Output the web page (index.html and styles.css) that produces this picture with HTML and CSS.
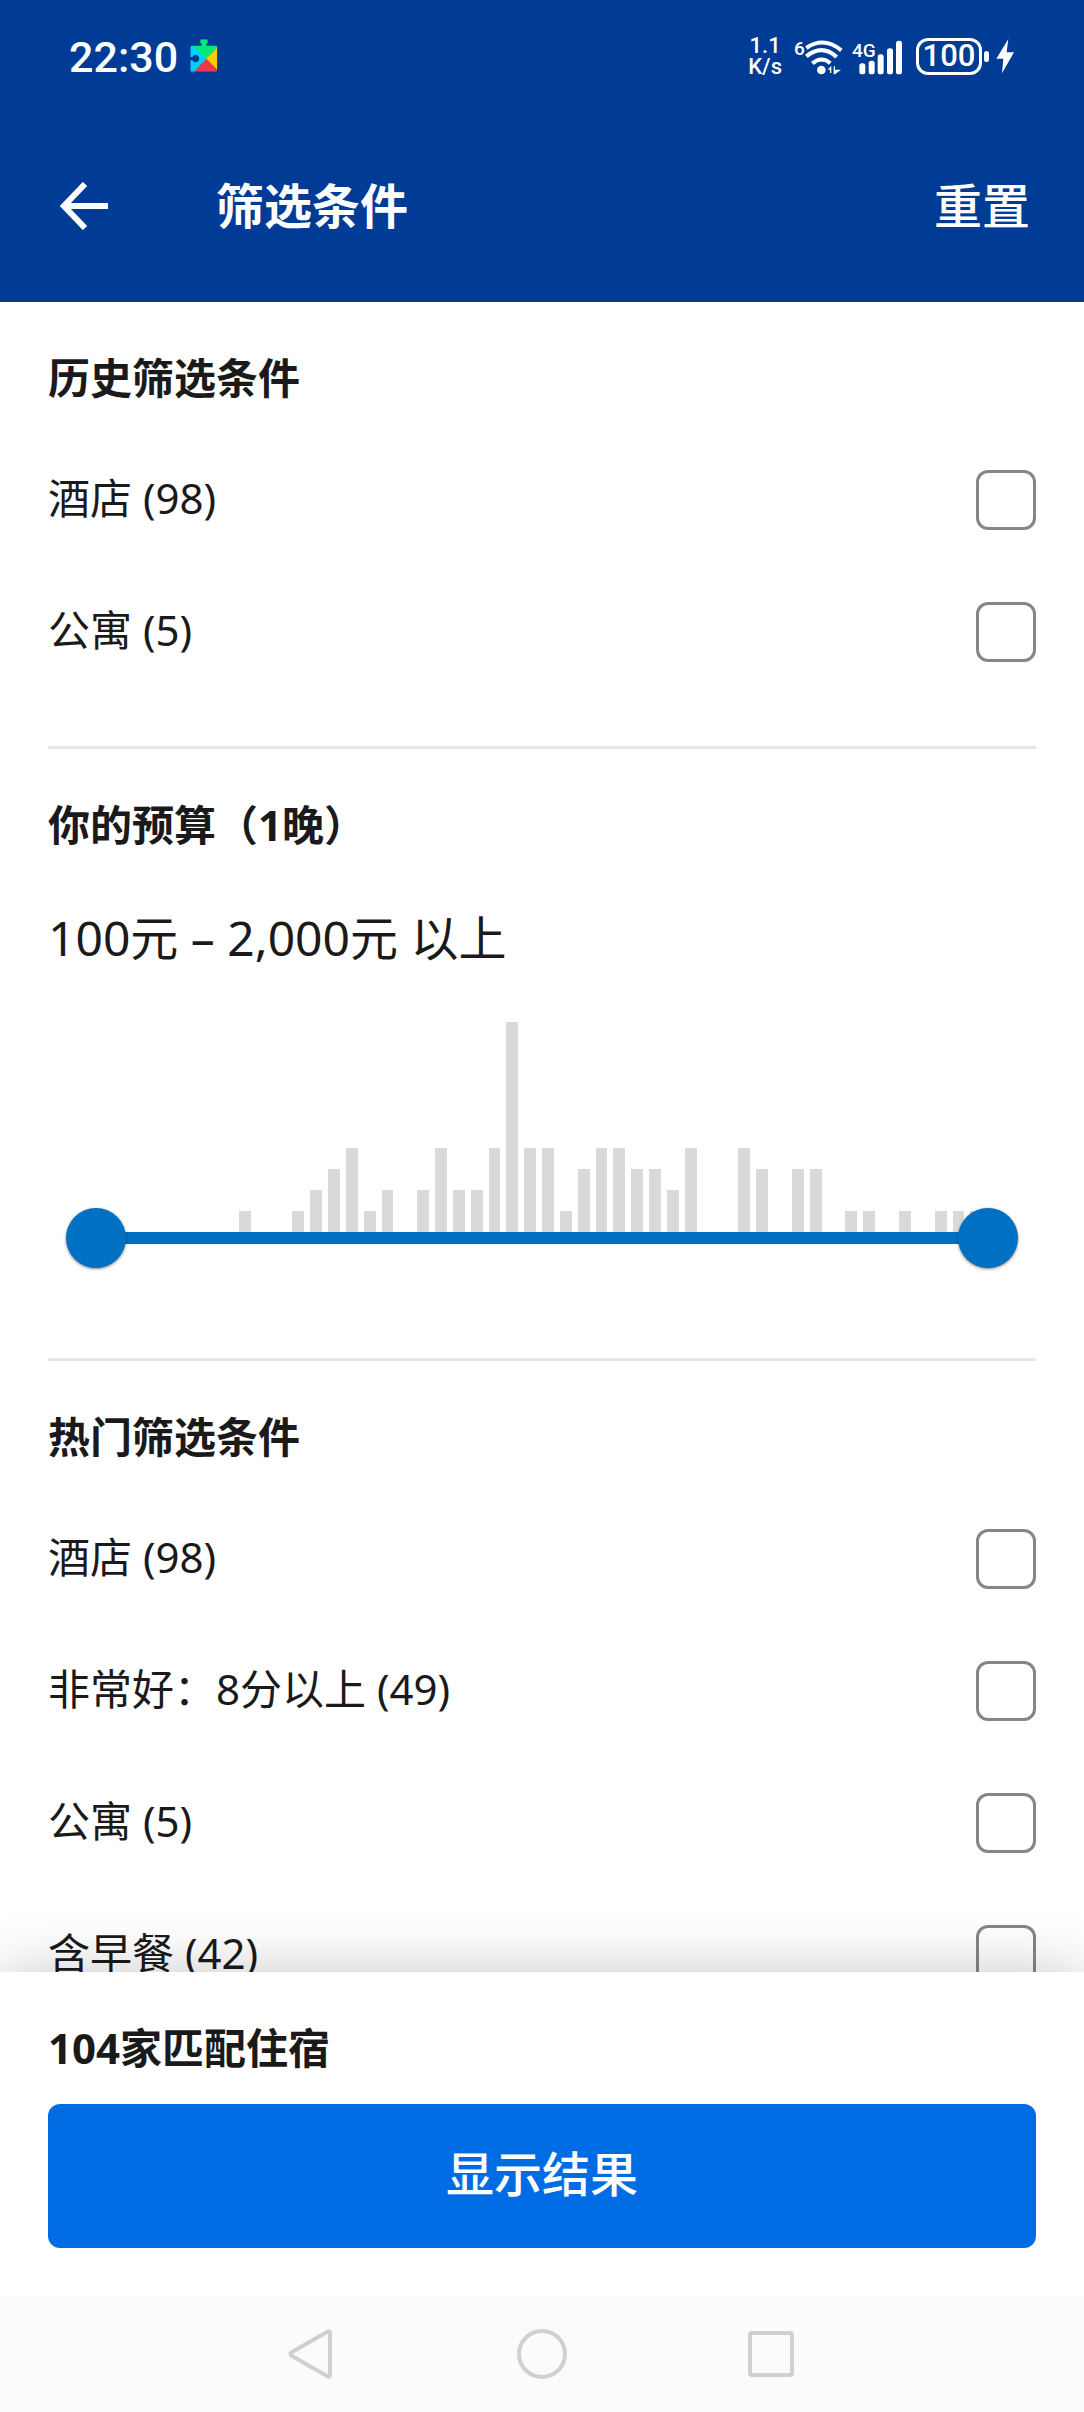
FILE: index.html
```html
<!DOCTYPE html>
<html lang="zh-CN">
<head>
<meta charset="utf-8">
<meta name="viewport" content="width=device-width">
<title>筛选条件</title>
<link rel="stylesheet" href="styles.css">
</head>
<body>
<header class="top">
  <div class="status">
    <span class="clock">22:30</span>
    <svg class="puzzle" width="28" height="34" viewBox="0 0 84 102" aria-hidden="true">
      <clipPath id="piece"><path d="M6 20H35V14L31 12V2Q31 1 32 1H52Q53 1 53 2V12L49 14V20H78Q82 20 82 24V94Q82 98 78 98H5Q1 98 1 94V64H7A11 11 0 1 0 7 54H1V25Q1 20 6 20Z"/></clipPath>
      <g clip-path="url(#piece)">
        <path fill="#00cfff" d="M0 8V102H12L50 60Z"/>
        <path fill="#00ea75" d="M8 20V0H84V26L49 61Z"/>
        <path fill="#ffc800" d="M84 24V96L48 60Z"/>
        <path fill="#f5364a" d="M8 102L49 59L84 95V102Z"/>
      </g>
    </svg>
    <div class="indicators">
      <span class="speed"><span>1.1</span><span>K/s</span></span>
      <svg width="50" height="46" viewBox="0 -12 150 138" aria-hidden="true">
        <text class="tag" x="0" y="54">6</text>
        <g fill="none" stroke="#fff" stroke-width="12">
          <path d="M37 33Q89 -3 142 40"/><path d="M37 58Q84 20 128 60"/><path d="M55 79Q84 56 109 79"/>
        </g>
        <circle cx="82" cy="99" r="13" fill="#fff"/>
        <path fill="#fff" d="M101 98L112 86V108H108V98ZM119 88H123V98H141L123 112H119Z"/>
      </svg>
      <svg width="52" height="46" viewBox="0 -12 156 138" aria-hidden="true">
        <text class="tag" x="0" y="61">4G</text>
        <g fill="#fff">
          <rect x="22" y="79" width="18" height="33" rx="8"/><rect x="50" y="71" width="18" height="41" rx="8"/>
          <rect x="77" y="52" width="18" height="60" rx="8"/><rect x="105" y="34" width="18" height="78" rx="8"/>
          <rect x="132" y="11" width="18" height="101" rx="8"/>
        </g>
      </svg>
      <span class="battery">100</span>
      <svg width="18" height="36" viewBox="0 0 54 108" aria-hidden="true"><path fill="#fff" d="M37 3L1 62H22L18 106L54 43H32Z"/></svg>
    </div>
  </div>
  <div class="appbar">
    <button class="back" type="button" aria-label="返回">
      <svg width="48" height="48" viewBox="0 0 48 48" aria-hidden="true"><path d="M48 24H5M25 2L4 24L25 46" fill="none" stroke="#fff" stroke-width="6"/></svg>
    </button>
    <h1>筛选条件</h1>
    <button class="reset" type="button">重置</button>
  </div>
</header>

<main class="filters">
  <section class="group">
    <h2>历史筛选条件</h2>
    <label class="option"><span>酒店 (98)</span><input type="checkbox"></label>
    <label class="option"><span>公寓 (5)</span><input type="checkbox"></label>
  </section>
  <section class="group">
    <h2>你的预算（1晚）</h2>
    <p class="price">100元 – 2,000元 以上</p>
    <div class="budget">
      <div class="bars" aria-hidden="true">
        <i></i><i></i><i></i><i></i><i></i><i></i><i></i><i></i><i style="height:10%"></i><i></i>
        <i></i><i style="height:10%"></i><i style="height:20%"></i><i style="height:30%"></i><i style="height:40%"></i><i style="height:10%"></i><i style="height:20%"></i><i></i><i style="height:20%"></i><i style="height:40%"></i>
        <i style="height:20%"></i><i style="height:20%"></i><i style="height:40%"></i><i style="height:100%"></i><i style="height:40%"></i><i style="height:40%"></i><i style="height:10%"></i><i style="height:30%"></i><i style="height:40%"></i><i style="height:40%"></i>
        <i style="height:30%"></i><i style="height:30%"></i><i style="height:20%"></i><i style="height:40%"></i><i></i><i></i><i style="height:40%"></i><i style="height:30%"></i><i></i><i style="height:30%"></i>
        <i style="height:30%"></i><i></i><i style="height:10%"></i><i style="height:10%"></i><i></i><i style="height:10%"></i><i></i><i style="height:10%"></i><i style="height:10%"></i><i style="height:10%"></i>
      </div>
      <div class="track">
        <input type="range" min="100" max="2000" value="100" aria-label="最低价">
        <input type="range" min="100" max="2000" value="2000" aria-label="最高价">
      </div>
    </div>
  </section>
  <section class="group">
    <h2>热门筛选条件</h2>
    <label class="option"><span>酒店 (98)</span><input type="checkbox"></label>
    <label class="option"><span>非常好：8分以上 (49)</span><input type="checkbox"></label>
    <label class="option"><span>公寓 (5)</span><input type="checkbox"></label>
    <label class="option"><span>含早餐 (42)</span><input type="checkbox"></label>
  </section>
</main>

<footer class="sheet">
  <p class="count">104家匹配住宿</p>
  <button class="show" type="button">显示结果</button>
</footer>
<nav class="system">
  <button type="button" aria-label="返回"><svg width="52" height="52" viewBox="0 0 52 52"><path d="M43 5V47Q43 50 40 48L5 28Q2 26 5 24L40 4Q43 2 43 5Z"/></svg></button>
  <button type="button" aria-label="主屏幕"><svg width="52" height="52" viewBox="0 0 52 52"><circle cx="26" cy="26" r="23"/></svg></button>
  <button type="button" aria-label="最近任务"><svg width="52" height="52" viewBox="0 0 52 52"><rect x="5" y="5" width="42" height="42" rx="2"/></svg></button>
</nav>
</body>
</html>
```
FILE: styles.css
```css
* { box-sizing: border-box; }

body {
  margin: 0;
  height: 100vh;
  display: flex;
  flex-direction: column;
  background: #fff;
  color: #1a1a1a;
  font: 42px/56px "Noto Sans", "Noto Sans CJK SC", sans-serif;
}

h1, h2, p { margin: 0; }

button {
  border: 0;
  padding: 0;
  background: none;
  color: inherit;
  font: inherit;
}

svg { display: block; }

.top {
  flex: none;
  background: #003b95;
  color: #fff;
}

.status {
  display: flex;
  align-items: center;
  height: 112px;
  padding: 0 70px 0 69px;
  font-family: Roboto, sans-serif;
}

.clock {
  padding-top: 2px;
  font-size: 43px;
  font-weight: 500;
}

.puzzle { margin-left: 12px; }

.indicators {
  display: flex;
  align-items: center;
  gap: 8px;
  margin-left: auto;
}

.speed {
  display: flex;
  flex-direction: column;
  align-items: center;
  margin-right: 4px;
  font-size: 22px;
  font-weight: 500;
  line-height: 21px;
}

.tag {
  fill: #fff;
  font-size: 57px;
  font-weight: 500;
}

.battery {
  position: relative;
  display: flex;
  align-items: center;
  justify-content: center;
  width: 66px;
  height: 37px;
  margin: 0 6px 0 4px;
  border: 3px solid #fff;
  border-radius: 12px;
  font-size: 31px;
  font-weight: 500;
}

.battery::after {
  content: "";
  position: absolute;
  right: -10px;
  width: 5px;
  height: 11px;
  border-radius: 3px;
  background: #fff;
}

.appbar {
  display: flex;
  align-items: center;
  height: 190px;
  padding: 0 54px 2px 60px;
}

h1 {
  margin-left: 108px;
  font-size: 48px;
  font-weight: 700;
}

.reset {
  margin-left: auto;
  font-size: 48px;
  font-weight: 500;
}

.filters {
  flex: 1;
  min-height: 0;
  overflow-y: auto;
  scrollbar-width: none;
  padding: 0 48px;
}

.group {
  padding: 48px 0;
  border-bottom: 3px solid #e6e6e6;
}

h2 {
  margin-bottom: 28px;
  font-size: 42px;
  font-weight: 700;
}

.option {
  display: flex;
  align-items: center;
  justify-content: space-between;
  height: 132px;
}

.option span { padding-bottom: 4px; }

.option input {
  appearance: none;
  width: 60px;
  height: 60px;
  margin: 0;
  border: 3px solid #868686;
  border-radius: 12px;
}

.option input:checked { background: #006ce4; }

.price {
  padding: 25px 0 52px;
  font-size: 48px;
  line-height: 64px;
}

.budget { padding: 0 18px 66px; }

.bars {
  display: flex;
  align-items: flex-end;
  height: 210px;
  padding: 0 30px;
}

.bars i {
  flex: 1;
  background: linear-gradient(90deg, #d9d9d9 65%, transparent 65%);
}

.track {
  position: relative;
  height: 12px;
  background: linear-gradient(#0071c2, #0071c2) center / calc(100% - 60px) 100% no-repeat;
}

.track input {
  appearance: none;
  position: absolute;
  top: -24px;
  left: 0;
  width: 100%;
  height: 60px;
  margin: 0;
  background: none;
  pointer-events: none;
}

.track input::-webkit-slider-thumb {
  appearance: none;
  width: 60px;
  height: 60px;
  border-radius: 50%;
  background: #0071c2;
  box-shadow: 0 1px 3px rgba(0, 0, 0, 0.5);
  pointer-events: auto;
}

.sheet {
  position: relative;
  flex: none;
  padding: 48px;
  background: #fff;
  box-shadow: 0 0 56px rgba(0, 0, 0, 0.22);
}

.count {
  margin-bottom: 28px;
  font-weight: 700;
}

.show {
  display: block;
  width: 100%;
  height: 144px;
  padding-bottom: 4px;
  border-radius: 12px;
  background: #006ce4;
  color: #fff;
  font-size: 48px;
  font-weight: 500;
}

.system {
  position: relative;
  flex: none;
  display: flex;
  justify-content: center;
  align-items: center;
  gap: 177px;
  height: 116px;
  background: #fbfbfb;
}

.system svg {
  fill: none;
  stroke: #d0d0d0;
  stroke-width: 4;
}
```
